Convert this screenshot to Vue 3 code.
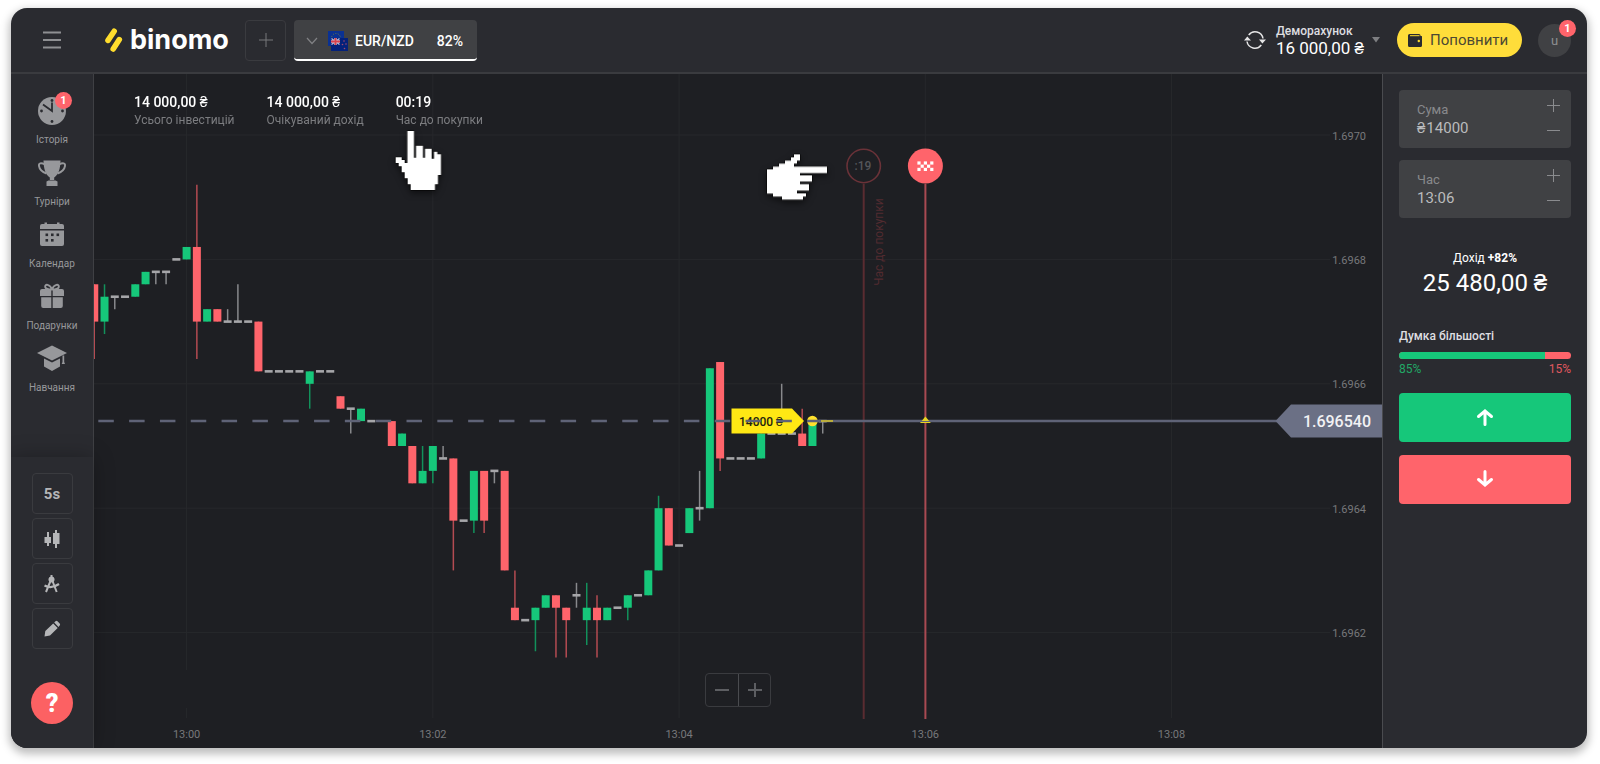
<script setup>
import { ref } from 'vue'

const amount = ref('14000')
const time = ref('13:06')

const navItems = [
  { id: 'history', label: 'Історія', badge: 1 },
  { id: 'cup', label: 'Турніри' },
  { id: 'calendar', label: 'Календар' },
  { id: 'gift', label: 'Подарунки' },
  { id: 'learn', label: 'Навчання' },
]

const stats = [
  { value: '14 000,00 ₴', label: 'Усього інвестицій' },
  { value: '14 000,00 ₴', label: 'Очікуваний дохід' },
  { value: '00:19', label: 'Час до покупки' },
]

// Plot scale: one slot is five seconds, one level is 0.00002 below 1.6970
const slotX = (i) => 186.6 + i * 10.26
const levelY = (u) => 135 + u * 12.44

const timeMarks = ['13:00', '13:02', '13:04', '13:06', '13:08'].map((label, n) => ({ label, x: slotX(n * 24) }))
const priceMarks = ['1.6970', '1.6968', '1.6966', '1.6964', '1.6962'].map((label, n) => ({ label, y: levelY(n * 10) }))

// [slot, kind, body top, body bottom, wick top, wick bottom]
const candles = [
  [-9, 'r', 12, 15, 12, 18], [-8, 'g', 13, 15, 12, 16], [-7, 'n', 13, 13, 13, 14], [-6, 'n', 13, 13, 13, 13],
  [-5, 'g', 12, 13, 12, 13], [-4, 'g', 11, 12, 11, 12], [-3, 'n', 11, 11, 11, 12], [-2, 'n', 11, 11, 11, 12],
  [-1, 'n', 10, 10, 10, 10], [0, 'g', 9, 10, 9, 10], [1, 'r', 9, 15, 4, 18], [2, 'g', 14, 15, 14, 15],
  [3, 'r', 14, 15, 14, 15], [4, 'n', 15, 15, 14, 15], [5, 'n', 15, 15, 12, 15], [6, 'n', 15, 15, 15, 15],
  [7, 'r', 15, 19, 15, 19], [8, 'n', 19, 19, 19, 19], [9, 'n', 19, 19, 19, 19], [10, 'n', 19, 19, 19, 19],
  [11, 'n', 19, 19, 19, 19], [12, 'g', 19, 20, 19, 22], [13, 'n', 19, 19, 19, 19], [14, 'n', 19, 19, 19, 19],
  [15, 'r', 21, 22, 21, 22], [16, 'n', 22, 22, 22, 24], [17, 'g', 22, 23, 22, 23], [18, 'n', 23, 23, 23, 23],
  [20, 'r', 23, 25, 23, 25], [21, 'g', 24, 25, 24, 25], [22, 'r', 25, 28, 25, 28], [23, 'g', 27, 28, 25, 28],
  [24, 'g', 25, 27, 25, 28], [25, 'n', 26, 26, 25, 26], [26, 'r', 26, 31, 26, 35], [27, 'n', 31, 31, 31, 31],
  [28, 'g', 27, 31, 27, 32], [29, 'r', 27, 31, 27, 32], [30, 'n', 27, 27, 27, 28], [31, 'r', 27, 35, 27, 35],
  [32, 'r', 38, 39, 35, 39], [33, 'n', 39, 39, 39, 39], [34, 'g', 38, 39, 38, 41.5], [35, 'g', 37, 38, 37, 38],
  [36, 'r', 37, 38, 37, 42], [37, 'r', 38, 39, 38, 42], [38, 'n', 37, 37, 36, 38], [39, 'g', 38, 39, 36, 41],
  [40, 'r', 38, 39, 37, 42], [41, 'g', 38, 39, 38, 39], [42, 'n', 38, 38, 38, 38], [43, 'g', 37, 38, 37, 39],
  [44, 'n', 37, 37, 37, 37], [45, 'g', 35, 37, 35, 37], [46, 'g', 30, 35, 29, 35], [47, 'r', 30, 33, 30, 33],
  [48, 'n', 33, 33, 33, 33], [49, 'g', 30, 32, 30, 32], [50, 'n', 30, 30, 27, 31], [51, 'g', 18.75, 30, 18.75, 30],
  [52, 'r', 18.25, 26, 18.25, 27], [53, 'n', 26, 26, 26, 26], [54, 'n', 26, 26, 26, 26], [55, 'n', 26, 26, 26, 26],
  [56, 'g', 24, 26, 24, 26], [57, 'n', 24, 24, 24, 24], [58, 'n', 24, 24, 20, 24], [59, 'n', 24, 24, 24, 24],
  [60, 'r', 24, 25, 22, 25], [61, 'g', 23, 25, 23, 25], [62, 'n', 23, 23, 23, 24],
].map(([slot, kind, top, bottom, high, low]) => ({
  slot,
  kind,
  x: slotX(slot),
  y: kind === 'n' ? levelY(top) - 1.3 : levelY(top),
  h: kind === 'n' ? 2.6 : levelY(bottom) - levelY(top),
  high: levelY(high),
  low: levelY(low),
}))

const checks = [[0, 0], [2, 0], [4, 0], [1, 1], [3, 1], [0, 2], [2, 2], [4, 2]]
</script>

<template>
  <div class="window">
    <header class="top">
      <button class="menu" type="button" aria-label="Меню">
        <svg width="18" height="18" viewBox="0 0 18 18"><path d="M0 1.500h18M0 9h18M0 16.500h18" stroke="#8e8f92" stroke-width="2" /></svg>
      </button>
      <a class="logo" href="#">
        <svg width="18" height="26" viewBox="0 0 18 26">
          <g stroke="#ffdd2d" stroke-width="5.600" stroke-linecap="round">
            <path d="M9.200 4.200 3 13.400" /><path d="M14.300 12.600 8.200 22" />
          </g>
        </svg>
        <span>binomo</span>
      </a>
      <button class="square add" type="button" aria-label="Додати актив">
        <svg width="14" height="14" viewBox="0 0 14 14"><path d="M7 0v14M0 7h14" stroke="#77787b" stroke-width="1" /></svg>
      </button>
      <button class="asset" type="button">
        <svg class="chev" width="12" height="8" viewBox="0 0 12 8"><path d="M1 1l5 5.500L11 1" fill="none" stroke="#808184" stroke-width="1.200" /></svg>
        <svg width="22" height="22" viewBox="0 0 22 22">
          <rect x="1" y="1" width="16" height="15" fill="#0a3193" />
          <circle cx="9" cy="8" r="4.500" fill="none" stroke="#6f7d3b" stroke-width="1" stroke-dasharray="1 1.500" />
          <rect x="4" y="8" width="17" height="13" fill="#04217a" />
          <path d="M4.500 8.500l8 6M12.500 8.500l-8 6" stroke="#b9bddb" stroke-width="1.400" />
          <path d="M8.500 8v7M4 11.500h9" stroke="#e8d8e4" stroke-width="2.400" />
          <path d="M8.500 8v7M4 11.500h9" stroke="#d8424e" stroke-width="1.800" />
          <circle cx="17" cy="11" r=".8" fill="#a04a70" /><circle cx="19" cy="14" r=".8" fill="#a04a70" />
          <circle cx="15.500" cy="14.500" r=".8" fill="#a04a70" /><circle cx="17.500" cy="18.500" r=".8" fill="#a04a70" />
        </svg>
        <span class="pair">EUR/NZD</span>
        <span>82%</span>
      </button>
      <div class="account">
        <svg width="22" height="20" viewBox="0 0 22 20">
          <g fill="none" stroke="#e4e4e5" stroke-width="1.500">
            <path d="M3 11.500A8 8 0 0 0 17.300 15" /><path d="M19 8.500A8 8 0 0 0 4.700 5" />
          </g>
          <path d="M0 10.500h7L3.300 6.500zM15 9.500h7l-3.600 4z" fill="#e4e4e5" />
        </svg>
        <button class="balance" type="button">
          <span class="kind">Деморахунок</span>
          <span class="sum">16 000,00 ₴</span>
        </button>
        <svg class="tri" width="8" height="6" viewBox="0 0 8 6"><path d="M0 0h8L4 5.500z" fill="#7e7f82" /></svg>
        <button class="deposit" type="button">
          <svg width="14" height="13" viewBox="0 0 14 13">
            <path d="M1.500 0H11a1.500 1.500 0 0 1 1.500 1.500V2h1a.7.7 0 0 1 .5.700V11.500A1.500 1.500 0 0 1 12.500 13h-11A1.500 1.500 0 0 1 0 11.500v-10A1.500 1.500 0 0 1 1.500 0z" fill="#2a2b30" />
            <path d="M2 1.700h9.500" stroke="#ffdd2d" stroke-width="1" /><circle cx="10.800" cy="7" r="1.200" fill="#ffdd2d" />
          </svg>
          <span>Поповнити</span>
        </button>
        <button class="avatar" type="button">u<span class="badge">1</span></button>
      </div>
    </header>

    <div class="body">
      <aside class="side">
        <nav class="nav">
          <a v-for="item in navItems" :key="item.id" href="#">
            <span class="pic">
              <svg width="30" height="30" viewBox="0 0 30 30">
                <g v-if="item.id === 'history'">
                  <circle cx="15" cy="15" r="14" fill="#97989b" />
                  <g fill="#2a2b30"><circle cx="15" cy="4.500" r="1.400" /><circle cx="15" cy="25.500" r="1.400" /><circle cx="4.500" cy="15" r="1.400" /><circle cx="25.500" cy="15" r="1.400" /></g>
                  <path d="M6 8.500l9 6.500V6.500" fill="none" stroke="#2a2b30" stroke-width="1.800" />
                </g>
                <g v-else-if="item.id === 'cup'" fill="#97989b">
                  <path d="M6.500 2.500h17c0 8-2 14-6.300 17v2.500h-4.400v-2.500C8.500 16.500 6.500 10.500 6.500 2.500z" />
                  <path d="M8 6.500C4 4.500 1.500 5 2 8c.5 3.300 3.500 6 7.500 7.500M22 6.500c4-2 6.500-1.500 6 1.500-.5 3.300-3.500 6-7.500 7.500" fill="none" stroke="#97989b" stroke-width="1.900" />
                  <path d="M11.500 22.500h7l2 1v4.500h-11v-4.500z" />
                </g>
                <g v-else-if="item.id === 'calendar'" fill="#97989b">
                  <path d="M3 6a2 2 0 0 1 2-2h2.500V2.500h2.500V4h10V2.500h2.500V4H25a2 2 0 0 1 2 2v3H3z" />
                  <path d="M3 10.500h24v13.500a2 2 0 0 1-2 2H5a2 2 0 0 1-2-2z" />
                  <g fill="#2a2b30"><rect x="14" y="13.500" width="2.600" height="2.600" /><rect x="8.500" y="13.500" width="2.600" height="2.600" /><rect x="19.500" y="13.500" width="2.600" height="2.600" /><rect x="8.500" y="19" width="2.600" height="2.600" /><rect x="14" y="19" width="2.600" height="2.600" /></g>
                </g>
                <g v-else-if="item.id === 'gift'" fill="#97989b">
                  <path d="M14.300 7v7H3V9a2 2 0 0 1 2-2zM15.700 7v7H27V9a2 2 0 0 0-2-2zM4.200 15.200h10.100V26H6.200a2 2 0 0 1-2-2zM25.800 15.200H15.700V26h8.100a2 2 0 0 0 2-2z" />
                  <path d="M15 7.500C13 2 7.500 1.500 8.200 5c.3 1.500 3 2.500 6.800 2.500zM15 7.500C17 2 22.500 1.500 21.800 5c-.3 1.500-3 2.500-6.800 2.500z" fill="none" stroke="#97989b" stroke-width="1.900" />
                </g>
                <g v-else fill="#97989b">
                  <path d="M15 1.500 30 9l-15 7.500L0 9z" /><path d="M7 14.500l8 4 8-4v8l-8 4.500-8-4.500z" />
                  <path d="M25.500 11.500h1.700v6.500l.8 2h-3.300l.8-2z" />
                </g>
              </svg>
              <span v-if="item.badge" class="badge">{{ item.badge }}</span>
            </span>
            <span class="cap">{{ item.label }}</span>
          </a>
        </nav>
        <div class="tools">
          <button class="square" type="button">5s</button>
          <button class="square" type="button" aria-label="Тип графіка">
            <svg width="16" height="18" viewBox="0 0 16 18"><path d="M4 2v14M12 0v18" stroke="#b5b6b8" stroke-width="2" /><path d="M.5 7h6.500v6H.5zM9 3h6.500v11H9z" fill="#b5b6b8" /></svg>
          </button>
          <button class="square" type="button" aria-label="Індикатори">
            <svg width="16" height="18" viewBox="0 0 16 18"><circle cx="7.500" cy="4.500" r="3" fill="#b5b6b8" /><path d="M7.500 0v3M6.500 6 2 17M8.500 6l4.200 11" stroke="#b5b6b8" stroke-width="2" /><path d="M.5 10.500c4.500 2.500 9.500 2 14.500-1.500" fill="none" stroke="#b5b6b8" stroke-width="2.200" /></svg>
          </button>
          <button class="square" type="button" aria-label="Малювання">
            <svg width="18" height="18" viewBox="0 0 18 18"><path d="M1.500 16.500l.8-5.500 7.900-7.600 4.500 4.500-7.700 7.700zM11.200 2.500l1.300-1.200a1.500 1.500 0 0 1 2 0l2.200 2.200a1.500 1.500 0 0 1 0 2L15.500 6.900z" fill="#b5b6b8" /></svg>
          </button>
          <button class="help" type="button">?</button>
        </div>
      </aside>

      <main class="chart">
        <svg class="plot" viewBox="94 74 1288 674">
          <g class="grid">
            <line v-for="m in priceMarks" :key="m.label" x1="94" x2="1330" :y1="m.y" :y2="m.y" />
            <line v-for="m in timeMarks" :key="m.label" :x1="m.x" :x2="m.x" y1="74" y2="718" />
          </g>
          <rect x="180" y="670" width="14" height="38" fill="#1e1f23" />
          <g class="axis">
            <text v-for="m in priceMarks" :key="m.label" x="1366" :y="m.y + 4.5" text-anchor="end">{{ m.label }}</text>
            <text v-for="m in timeMarks" :key="m.label" :x="m.x" y="738" text-anchor="middle">{{ m.label }}</text>
          </g>

          <g v-for="c in candles" :key="c.slot" :class="c.kind">
            <line :x1="c.x" :x2="c.x" :y1="c.high" :y2="c.low" />
            <rect :x="c.x - 4" :y="c.y" width="8" :height="c.h" />
          </g>

          <line x1="863.7" x2="863.7" y1="184" y2="719" stroke="#5a2c31" stroke-width="2" />
          <circle cx="863.7" cy="166" r="16.700" fill="#1e1f23" stroke="#6a3238" stroke-width="1.600" />
          <text class="count" x="863" y="170" text-anchor="middle">:19</text>
          <text class="wait" transform="translate(883 242) rotate(-90)" text-anchor="middle">Час до покупки</text>
          <line x1="925.4" x2="925.4" y1="184" y2="719" stroke="#a84a52" stroke-width="2" />
          <circle cx="925.4" cy="166" r="17.500" fill="#ff646b" />
          <rect v-for="([cx, cy], n) in checks" :key="n" :x="917.4 + cx * 3.2" :y="161.4 + cy * 3.2" width="3.200" height="3.200" fill="#fff" />

          <path d="M731.500 408.500h60.500L804 421l-12 12.500h-60.500z" fill="#ffe814" />
          <text class="stake" x="739" y="425.500">14000 ₴</text>
          <circle cx="812.4" cy="421" r="5.300" fill="#ffe12d" />
          <path d="M98.300 421H806" stroke="#5f6377" stroke-width="2.400" stroke-dasharray="15.500 15.320" />
          <path d="M807 421h470" stroke="#5f6377" stroke-width="2.400" />
          <path d="M821 421h12" stroke="#d8c62a" stroke-width="1.500" />
          <path d="M920 423l5.400-6.500 5.400 6.500z" fill="#e8d420" />
          <path d="M919 421.500h13" stroke="#5f6377" stroke-width="1" />
          <path d="M1275.500 421l15.500-16.500h91v33h-91z" fill="#6b7085" />
          <text class="now" x="1371" y="427" text-anchor="end">1.696540</text>

          <g class="hand">
            <path transform="translate(380 80) scale(.3333)" d="M82 153h20v80h6v-36h21v36h6v-27h20v30h7v-21h10v8h11v62h-9v28h-9v17H92v-17h-9v-18h-9v-18h-9v-18h-9v-10h-9v-17h18v8h9v9h8z" />
            <path transform="translate(700 130) scale(.3333)" d="M201 118h18v-8h18v-9h18v-9h18v-10h9v-9h18v19h-9v9h-9v9h99v19h-81v7h36v19h-36v7h27v20h-36v8h27v10h-9v9h-63v-9h-27v-9h-18z" />
          </g>
        </svg>

        <dl class="stats">
          <div v-for="s in stats" :key="s.label">
            <dd>{{ s.value }}</dd>
            <dt>{{ s.label }}</dt>
          </div>
        </dl>

        <div class="zoom">
          <button type="button" aria-label="Зменшити"><svg width="14" height="14" viewBox="0 0 14 14"><path d="M0 7h14" stroke="#5d5e62" stroke-width="2" /></svg></button>
          <button type="button" aria-label="Збільшити"><svg width="14" height="14" viewBox="0 0 14 14"><path d="M0 7h14M7 0v14" stroke="#5d5e62" stroke-width="2" /></svg></button>
        </div>
      </main>

      <aside class="deal">
        <div class="field">
          <div class="text">
            <label for="amount">Сума</label>
            <div class="value"><span>₴</span><input id="amount" v-model="amount" type="text" /></div>
          </div>
          <div class="step">
            <button type="button" aria-label="Більше"><svg width="13" height="13" viewBox="0 0 13 13"><path d="M0 6.500h13M6.500 0v13" /></svg></button>
            <button type="button" aria-label="Менше"><svg width="13" height="13" viewBox="0 0 13 13"><path d="M0 6.500h13" /></svg></button>
          </div>
        </div>
        <div class="field">
          <div class="text">
            <label for="time">Час</label>
            <div class="value"><input id="time" v-model="time" type="text" /></div>
          </div>
          <div class="step">
            <button type="button" aria-label="Пізніше"><svg width="13" height="13" viewBox="0 0 13 13"><path d="M0 6.500h13M6.500 0v13" /></svg></button>
            <button type="button" aria-label="Раніше"><svg width="13" height="13" viewBox="0 0 13 13"><path d="M0 6.500h13" /></svg></button>
          </div>
        </div>
        <p class="income">Дохід <b>+82%</b></p>
        <p class="profit">25 480,00 ₴</p>
        <p class="mood">Думка більшості</p>
        <div class="bar"><i></i></div>
        <div class="shares"><span>85%</span><span>15%</span></div>
        <button class="go up" type="button" aria-label="Вгору">
          <svg width="18" height="18" viewBox="0 0 18 18"><path d="M9 16.500V3.500M2.500 8.500 9 3l6.500 5.500" /></svg>
        </button>
        <button class="go down" type="button" aria-label="Вниз">
          <svg width="18" height="18" viewBox="0 0 18 18"><path d="M9 1.500v13M2.500 9.500 9 15l6.500-5.500" /></svg>
        </button>
      </aside>
    </div>
  </div>
</template>

<style>
body {
  background: #fff;
}
</style>

<style scoped>
.window {
  margin: 8px 13px 16px 11px;
  border-radius: 16px;
  overflow: hidden;
  background: #2a2b30;
  box-shadow: 0 4px 8px 2px rgba(0, 0, 0, 0.26);
  font-family: Roboto, "Liberation Sans", sans-serif;
  color: #fff;
}
button {
  padding: 0;
  border: 0;
  background: none;
  color: inherit;
  font: inherit;
  cursor: pointer;
}
a {
  color: inherit;
  text-decoration: none;
}
svg {
  display: block;
  flex: none;
}
p, dl, dd {
  margin: 0;
}
.top {
  display: flex;
  align-items: center;
  height: 64px;
  border-bottom: 2px solid #3a3b3f;
}
.menu {
  margin-left: 32px;
}
.logo {
  display: flex;
  align-items: center;
  gap: 7px;
  margin-left: 44px;
  width: 124px;
  font: 700 27px/32px Inter, sans-serif;
}
.square {
  box-sizing: border-box;
  width: 41px;
  height: 41px;
  display: flex;
  align-items: center;
  justify-content: center;
  border: 1px solid #3a3b3f;
  border-radius: 4px;
  color: #b5b6b8;
  font-size: 15px;
  font-weight: 700;
}
.add {
  margin-left: 16px;
}
.asset {
  box-sizing: border-box;
  display: flex;
  align-items: center;
  width: 183px;
  height: 41px;
  margin-left: 8px;
  padding: 4px 14px 0 12px;
  border-bottom: 2px solid #fff;
  border-radius: 4px;
  background: #404144;
  font-size: 14px;
  font-weight: 500;
}
.chev {
  margin-right: 9px;
}
.pair {
  margin: 0 auto 0 6px;
}
.account {
  display: flex;
  align-items: center;
  margin-left: auto;
  padding-right: 16px;
}
.balance {
  display: flex;
  flex-direction: column;
  align-items: flex-start;
  margin-left: 10px;
}
.kind {
  font-size: 12px;
  line-height: 16px;
  font-weight: 500;
  color: #dedee0;
}
.sum {
  font-size: 17px;
  line-height: 18px;
}
.tri {
  margin: 0 17px 0 8px;
}
.deposit {
  box-sizing: border-box;
  display: flex;
  align-items: center;
  gap: 8px;
  height: 34px;
  width: 125px;
  padding: 0 11px;
  border-radius: 17px;
  background: #ffdd3a;
  color: #4c4833;
  font-size: 15px;
}
.avatar {
  position: relative;
  width: 33px;
  height: 33px;
  margin-left: 16px;
  border-radius: 50%;
  background: #404144;
  color: #8e8f92;
  font-size: 13px;
}
.badge {
  position: absolute;
  top: -4px;
  right: -5px;
  width: 17px;
  height: 17px;
  border-radius: 50%;
  background: #ff646b;
  color: #fff;
  font-size: 11px;
  line-height: 17px;
  font-weight: 700;
  text-align: center;
}
.body {
  display: flex;
  align-items: stretch;
}
.side {
  flex: none;
  width: 82px;
  display: flex;
  flex-direction: column;
  border-right: 1px solid #3f4044;
}
.nav {
  flex: 1;
  display: flex;
  flex-direction: column;
  align-items: center;
  gap: 11px;
  padding-top: 22px;
}
.nav a {
  display: flex;
  flex-direction: column;
  align-items: center;
  gap: 7px;
}
.pic {
  position: relative;
}
.cap {
  color: #97989b;
  font-size: 10px;
  line-height: 14px;
}
.tools {
  position: relative;
  z-index: 1;
  display: flex;
  flex-direction: column;
  align-items: center;
  gap: 4px;
  padding: 16px 0 24px;
  background: #2a2b30;
  box-shadow: 0 0 20px rgba(0, 0, 0, 0.28);
}
.help {
  width: 42px;
  height: 42px;
  margin-top: 29px;
  border-radius: 50%;
  background: #fc6163;
  font-size: 25px;
  font-weight: 900;
}
.chart {
  position: relative;
  flex: 1;
  min-width: 0;
  background: #1e1f23;
}
.plot {
  width: 100%;
  height: auto;
  font-family: Roboto, "Liberation Sans", sans-serif;
}
.grid line {
  stroke: #27282c;
  stroke-width: 1;
}
.axis {
  fill: #77787b;
  font-size: 11px;
}
.g rect { fill: #16c77a; }
.g line { stroke: #12915b; stroke-width: 1.5px; }
.r rect { fill: #ff646b; }
.r line { stroke: #b44b52; stroke-width: 1.5px; }
.n rect { fill: #a6a6a9; }
.n line { stroke: #88898c; stroke-width: 1.5px; }
.count {
  fill: #55565a;
  font-size: 12px;
  font-weight: 500;
}
.wait {
  fill: #522b30;
  font-size: 12px;
}
.stake {
  fill: #24240c;
  font-size: 12px;
  font-weight: 500;
}
.now {
  fill: #f2f2f4;
  font-size: 16px;
  font-weight: 500;
}
.hand {
  fill: #fff;
  stroke: #000;
  stroke-width: 3px;
  paint-order: stroke;
  filter: drop-shadow(0 3px 3px rgba(0, 0, 0, 0.5));
}
.stats {
  position: absolute;
  top: 20px;
  left: 40px;
  display: flex;
  gap: 32px;
}
.stats div {
  display: flex;
  flex-direction: column;
}
.stats dd {
  font-size: 14px;
  line-height: 17px;
  font-weight: 500;
}
.stats dt {
  font-size: 12px;
  line-height: 18px;
  color: #7c7d80;
}
.zoom {
  position: absolute;
  left: 50%;
  bottom: 41px;
  transform: translateX(-50%);
  display: flex;
  border: 1px solid #3a3b3f;
  border-radius: 4px;
}
.zoom button {
  width: 32px;
  height: 32px;
  display: flex;
  align-items: center;
  justify-content: center;
}
.zoom button + button {
  border-left: 1px solid #4a4b4f;
}
.deal {
  flex: none;
  box-sizing: border-box;
  width: 205px;
  display: flex;
  flex-direction: column;
  padding: 16px;
  border-left: 1px solid #4a4b4f;
}
.field {
  display: flex;
  justify-content: space-between;
  align-items: center;
  height: 58px;
  margin-bottom: 12px;
  padding: 0 11px 0 18px;
  border-radius: 4px;
  background: #404144;
}
.text {
  flex: 1;
  min-width: 0;
}
.text label {
  display: block;
  font-size: 13px;
  line-height: 19px;
  color: #88898c;
}
.value {
  display: flex;
  gap: 1px;
  font-size: 15px;
  line-height: 19px;
  color: #babbbd;
}
.value input {
  width: 100%;
  min-width: 0;
  padding: 0;
  border: 0;
  outline: 0;
  background: none;
  color: inherit;
  font: inherit;
}
.step {
  display: flex;
  flex-direction: column;
  gap: 12px;
  padding-bottom: 2px;
}
.step path {
  stroke: #8a8b8e;
  stroke-width: 1;
}
.income {
  margin-top: 19px;
  font-size: 12px;
  line-height: 18px;
  text-align: center;
}
.profit {
  font-size: 24px;
  line-height: 32px;
  text-align: center;
}
.mood {
  margin-top: 29px;
  font-size: 12px;
  line-height: 16px;
  font-weight: 500;
  color: #dedee0;
}
.bar {
  height: 7px;
  margin-top: 8px;
  border-radius: 4px;
  overflow: hidden;
  background: #ff646b;
}
.bar i {
  display: block;
  width: 85%;
  height: 100%;
  background: #16c77a;
}
.shares {
  display: flex;
  justify-content: space-between;
  margin: 2px 0 16px;
  font-size: 12px;
  line-height: 16px;
}
.shares span:first-child { color: #22a866; }
.shares span:last-child { color: #e0585f; }
.go {
  height: 49px;
  border-radius: 4px;
  display: flex;
  align-items: center;
  justify-content: center;
  padding-bottom: 2px;
}
.go path {
  fill: none;
  stroke: #fff;
  stroke-width: 3;
  stroke-linecap: round;
}
.up { background: #16c77a; }
.down {
  margin-top: 13px;
  background: #ff646b;
}
</style>
